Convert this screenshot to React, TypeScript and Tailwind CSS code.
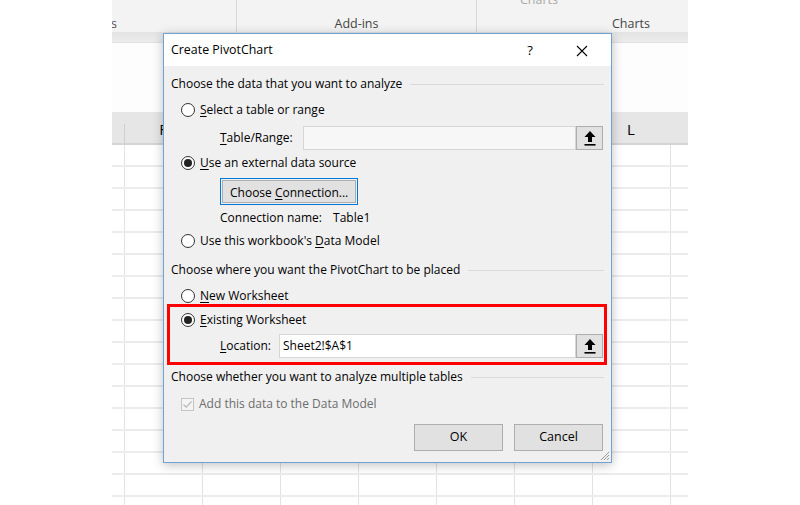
import React from 'react';

const font = "font-['Open_Sans',sans-serif]";

function Radio({ checked }: { checked?: boolean }) {
  return (
    <span className="w-[14px] h-[14px] rounded-full border border-[#333] bg-white flex items-center justify-center shrink-0">
      {checked && <span className="w-[8px] h-[8px] rounded-full bg-[#222]" />}
    </span>
  );
}

function UpButton() {
  return (
    <div className="w-[27px] h-[24px] bg-[#e1e1e1] border border-[#adadad] flex items-center justify-center shrink-0">
      <svg width="14" height="16" viewBox="0 0 14 16">
        <path d="M7 1 L1.5 7 L5 7 L5 12 L9 12 L9 7 L12.5 7 Z" fill="#000" />
        <rect x="1.5" y="14" width="11" height="1.6" fill="#000" />
      </svg>
    </div>
  );
}

function Section({ label, h }: { label: string; h: string }) {
  return (
    <div className={`flex items-center gap-2 pl-[7px] pr-[7px] ${h}`}>
      <span className="whitespace-nowrap">{label}</span>
      <span className="flex-1 h-px bg-[#dadada]" />
    </div>
  );
}

function U({ children }: { children: React.ReactNode }) {
  return <span className="underline underline-offset-2">{children}</span>;
}

const cols = ['F', 'G', 'H', 'I', 'J', 'K', 'L'];

function Sheet() {
  return (
    <div className="w-[576px] h-[505px] flex flex-col bg-white overflow-hidden">
      {/* ribbon */}
      <div className="h-[32px] shrink-0 bg-[#f3f3f3] flex text-[12.5px] text-[#444] relative">
        <div className="w-[124px] pt-[15px]">
          <span className="-ml-[1px] text-[#555]">s</span>
        </div>
        <div className="w-[240px] border-l border-[#d8d8d8] text-center pt-[15px]">Add-ins</div>
        <div className="flex-1 border-l border-[#d8d8d8] text-right pr-[38px] pt-[15px]">Charts</div>
        <span className="absolute left-[408px] -top-[9px] text-[#aaa]">Charts</span>
      </div>
      <div className="h-[11px] shrink-0 bg-[linear-gradient(#e3e3e3,#ececec)] border-b border-[#e0e0e0]" />
      <div className="h-[69px] shrink-0 bg-[#fdfdfd]" />
      {/* column header */}
      <div className="h-[33px] shrink-0 bg-[#e6e6e6] border-b-2 border-[#d4d4d4] flex text-[15px] text-black">
        <div className="w-[12px]" />
        {cols.map((c) => (
          <div key={c} className="w-[78px] shrink-0 flex items-end justify-center pb-[3px] relative">
            <span className="absolute left-0 top-[12px] bottom-0 w-px bg-[#cfcfcf]" />
            {c}
          </div>
        ))}
      </div>
      {/* grid */}
      <div className="flex-1">
        {Array.from({ length: 17 }).map((_, i) => (
          <div key={i} className="h-[22px] border-b-2 border-[#ececec] flex">
            <div className="w-[12px]" />
            {cols.map((c) => (
              <div key={c} className="w-[78px] shrink-0 border-l border-[#e2e2e2]" />
            ))}
            <div className="flex-1 border-l border-[#e2e2e2]" />
          </div>
        ))}
      </div>
    </div>
  );
}

function Dialog() {
  return (
    <div className="absolute left-[163px] top-[33px] w-[449px] h-[430px] border border-[#6fa2d8] bg-[#f0f0f0] shadow-[0_2px_10px_rgba(0,0,0,0.25)] text-[12px] text-black flex flex-col">
      {/* title */}
      <div className="h-[32px] bg-white flex items-center pl-[7px] pt-[1px] text-[12.4px]">
        <span className="flex-1">Create PivotChart</span>
        <span className="w-[20px] text-center mr-[36px] text-[13px]">?</span>
        <svg width="12" height="12" viewBox="0 0 12 12" className="mr-[23px]">
          <path d="M1 1 L11 11 M11 1 L1 11" stroke="#000" strokeWidth="1.1" />
        </svg>
      </div>
      <div className="h-[8px]" />
      <Section label="Choose the data that you want to analyze" h="h-[20px]" />
      <div className="h-[32px] flex items-center pl-[17px] gap-[5px]">
        <Radio />
        <span>
          <U>S</U>elect a table or range
        </span>
      </div>
      <div className="h-[24px] flex items-center pl-[56px] pr-[8px]">
        <span className="w-[83px]">
          <U>T</U>able/Range:
        </span>
        <div className="flex-1 h-[24px] bg-[#f7f7f7] border border-[#d6d6d6]" />
        <UpButton />
      </div>
      <div className="h-[26px] flex items-center pl-[17px] gap-[5px]">
        <Radio checked />
        <span>
          <U>U</U>se an external data source
        </span>
      </div>
      <div className="h-[30px] flex items-center pl-[56px]">
        <div className="h-[27px] border border-[#0078d7] p-[1px]">
          <div className="h-full border border-[#adadad] bg-[#e1e1e1] px-[7px] leading-[23px]">
            <span>
              Choose <U>C</U>onnection...
            </span>
          </div>
        </div>
      </div>
      <div className="h-[24px] flex items-center pl-[56px]">
        <span>Connection name:</span>
        <span className="ml-[11px]">Table1</span>
      </div>
      <div className="h-[22px] flex items-center pl-[17px] gap-[5px]">
        <Radio />
        <span>
          Use this workbook's <U>D</U>ata Model
        </span>
      </div>
      <Section label="Choose where you want the PivotChart to be placed" h="h-[36px]" />
      <div className="h-[16px] flex items-center pl-[17px] gap-[5px]">
        <Radio />
        <span>
          <U>N</U>ew Worksheet
        </span>
      </div>
      <div className="ml-[3px] mr-[4px] h-[61px] border-[3px] border-[#ff0000] flex flex-col">
        <div className="h-[26px] flex items-center pl-[11px] gap-[5px]">
          <Radio checked />
          <span>
            <U>E</U>xisting Worksheet
          </span>
        </div>
        <div className="h-[26px] flex items-center pl-[50px] pr-[1px]">
          <span className="w-[59px]">
            <U>L</U>ocation:
          </span>
          <div className="flex-1 h-[24px] bg-white border border-[#d6d6d6] flex items-center pl-[3px]">
            Sheet2!$A$1
          </div>
          <UpButton />
        </div>
      </div>
      <Section label="Choose whether you want to analyze multiple tables" h="h-[24px]" />
      <div className="h-[30px] flex items-center pl-[17px] gap-[5px] text-[#6d6d6d]">
        <span className="w-[13px] h-[13px] border border-[#c4c4c4] bg-[#f4f4f4] flex items-center justify-center">
          <svg width="11" height="11" viewBox="0 0 11 11">
            <path d="M1.5 5.5 L4.2 8.2 L9.5 2.5" stroke="#b8b8b8" strokeWidth="1.2" fill="none" />
          </svg>
        </span>
        <span>Add this data to the Data Model</span>
      </div>
      <div className="flex justify-end gap-[11px] pr-[8px] pt-[5px]">
        <button className="w-[89px] h-[27px] bg-[#e1e1e1] border border-[#adadad] text-[12.5px]">OK</button>
        <button className="w-[89px] h-[27px] bg-[#e1e1e1] border border-[#adadad] text-[12.5px]">Cancel</button>
      </div>
      <svg width="10" height="10" viewBox="0 0 10 10" className="absolute right-[1px] bottom-[1px]">
        <path d="M9 1 L1 9 M9 4 L4 9 M9 7 L7 9" stroke="#9a9a9a" strokeWidth="1" />
      </svg>
    </div>
  );
}

export default function App() {
  return (
    <div className={`w-[800px] h-[505px] bg-white flex justify-center relative overflow-hidden ${font}`}>
      <Sheet />
      <Dialog />
    </div>
  );
}
